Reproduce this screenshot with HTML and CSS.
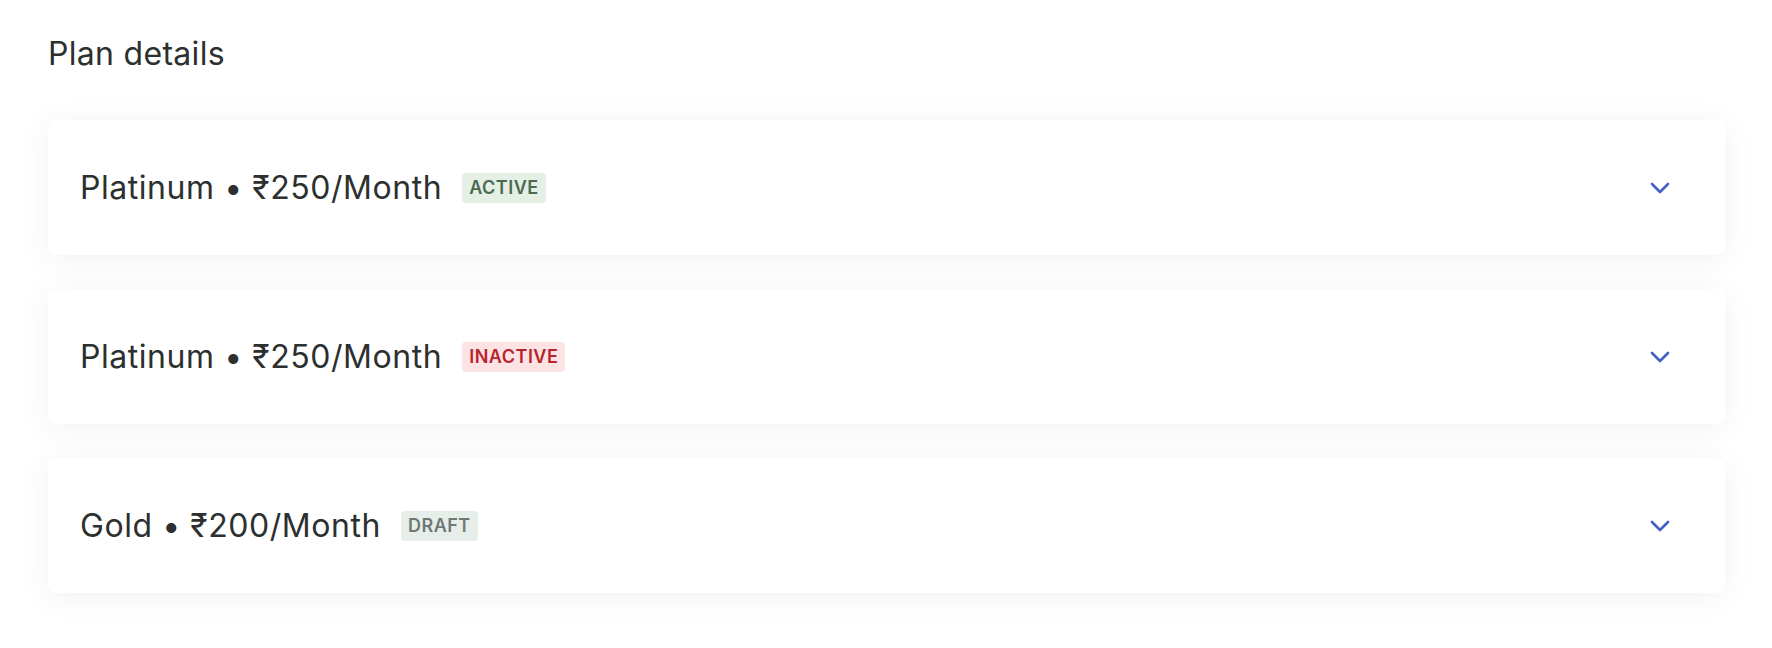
FILE: index.html
```html
<!DOCTYPE html>
<html lang="en">
<head>
<meta charset="utf-8">
<title>Plan details</title>
<link rel="stylesheet" href="styles.css">
</head>
<body>
<main class="page">
  <h1 class="heading">Plan details</h1>
  <ul class="plans">
    <li class="plan">
      <div class="plan-title">
        <span class="plan-name">Platinum • ₹250/Month</span>
        <span class="badge badge-active">Active</span>
      </div>
      <svg class="chevron" viewBox="0 0 20 12" width="20" height="12" aria-hidden="true"><path d="M2 2 L10 10 L18 2"/></svg>
    </li>
    <li class="plan">
      <div class="plan-title">
        <span class="plan-name">Platinum • ₹250/Month</span>
        <span class="badge badge-inactive">Inactive</span>
      </div>
      <svg class="chevron" viewBox="0 0 20 12" width="20" height="12" aria-hidden="true"><path d="M2 2 L10 10 L18 2"/></svg>
    </li>
    <li class="plan">
      <div class="plan-title">
        <span class="plan-name">Gold • ₹200/Month</span>
        <span class="badge badge-draft">Draft</span>
      </div>
      <svg class="chevron" viewBox="0 0 20 12" width="20" height="12" aria-hidden="true"><path d="M2 2 L10 10 L18 2"/></svg>
    </li>
  </ul>
</main>
</body>
</html>
```
FILE: styles.css
```css
html, body {
  margin: 0;
  padding: 0;
  background: #ffffff;
}
body {
  font-family: Inter, "Noto Sans", "DejaVu Sans", sans-serif;
  color: #2c302f;
}
.page {
  padding: 34px 47px 50px 48px;
}
.heading {
  margin: 0 0 46px 0;
  font-size: 32px;
  line-height: 40px;
  font-weight: 400;
  letter-spacing: 0.3px;
}
.plans {
  list-style: none;
  margin: 0;
  padding: 0;
  display: flex;
  flex-direction: column;
  gap: 34px;
}
.plan {
  height: 135px;
  box-sizing: border-box;
  background: #fff;
  border-radius: 8px;
  box-shadow: 0 4px 32px rgba(0, 0, 0, 0.06);
  display: flex;
  align-items: center;
  justify-content: space-between;
  padding: 0 55px 0 32px;
}
.plan-title {
  display: flex;
  align-items: center;
  gap: 20px;
}
.plan-name {
  font-size: 32px;
  line-height: 40px;
  font-weight: 400;
  letter-spacing: 0.55px;
  color: #2c302f;
}
.badge {
  display: inline-flex;
  align-items: center;
  height: 30px;
  padding: 0 7px;
  border-radius: 4px;
  font-size: 18px;
  font-weight: 600;
  text-transform: uppercase;
  letter-spacing: 0.5px;
}
.badge-active {
  background: #e4efe6;
  color: #4b6a50;
}
.badge-inactive {
  background: #fde3e4;
  color: #b7242b;
}
.badge-draft {
  background: #e7eeea;
  color: #707876;
}
.chevron {
  fill: none;
  stroke: #4460c4;
  stroke-width: 2.6;
  stroke-linecap: round;
  stroke-linejoin: round;
}
```
